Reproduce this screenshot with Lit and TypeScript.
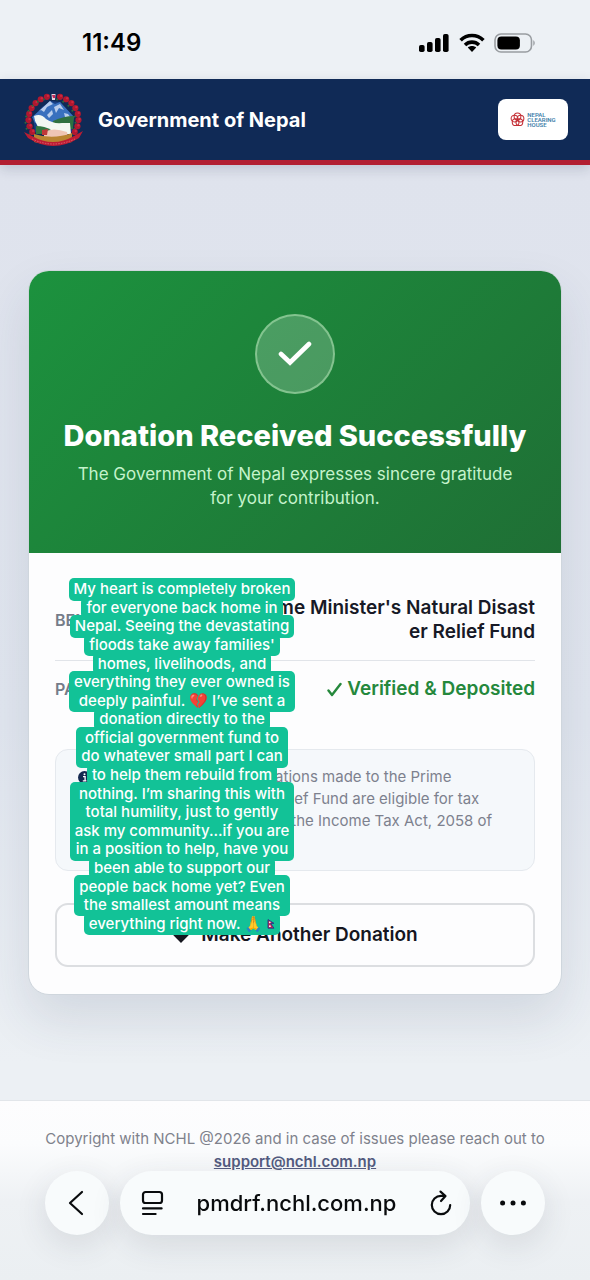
import { LitElement, html, css, svg } from "lit";
import { customElement } from "lit/decorators.js";

/* Caption lines; lines that share one plate are grouped together. */
const CAPTION: string[][] = [
  ["My heart is completely broken"],
  ["for everyone back home in"],
  ["Nepal. Seeing the devastating"],
  ["floods take away families'"],
  ["homes, livelihoods, and"],
  ["everything they ever owned is", "deeply painful. 💔 I’ve sent a"],
  ["donation directly to the"],
  ["official government fund to", "do whatever small part I can"],
  ["to help them rebuild from"],
  ["nothing. I’m sharing this with", "total humility, just to gently", "ask my community...if you are", "in a position to help, have you"],
  ["been able to support our"],
  ["people back home yet? Even", "the smallest amount means"],
  ["everything right now. 🙏"],
];

const flag = html`<svg class="flag" viewBox="0 0 8 10" aria-label="Nepal flag">
  <path d="M1 .6 L7 4.4 H3.6 L7 9.2 H1 Z" fill="#d4214d" stroke="#23408e" stroke-width="1" />
  <circle cx="2.8" cy="3.4" r=".8" fill="#fff" /><circle cx="2.9" cy="7.2" r=".9" fill="#fff" />
</svg>`;

@customElement("status-bar")
class StatusBar extends LitElement {
  static styles = css`
    :host { display: flex; justify-content: space-between; align-items: center; box-sizing: border-box; height: 79px; padding: 6px 53px 0 82px; background: #edf1f5; color: #000; }
    .time { font-size: 24px; font-weight: 600; line-height: 28px; }
    .icons { display: flex; align-items: center; gap: 9px; }
    svg { display: block; }
  `;
  render() {
    return html`
      <span class="time">11:49</span>
      <span class="icons">
        <svg width="31" height="20" viewBox="0 0 31 20">
          <rect x="0" y="12" width="5.6" height="7" rx="1.8" /><rect x="8" y="9" width="5.6" height="10" rx="1.8" />
          <rect x="16" y="5" width="5.6" height="14" rx="1.8" /><rect x="24" y="1" width="5.6" height="18" rx="1.8" />
        </svg>
        <svg width="26" height="20" viewBox="0 0 26 20" fill="none" stroke="#000" stroke-width="3.6">
          <path d="M1.6 7.2 C8 .9 18 .9 24.4 7.2" /><path d="M6 12 C10 8.2 16 8.2 20 12" />
          <path d="M8.8 14.6 C11 12.6 15 12.6 17.2 14.6 L13 19 Z" fill="#000" stroke="none" />
        </svg>
        <svg width="43" height="20" viewBox="0 0 43 20">
          <rect x="1" y="1" width="36.5" height="18" rx="6" fill="none" stroke="#999da1" stroke-width="1.6" />
          <rect x="3.4" y="3.4" width="22.5" height="13.2" rx="4" /><path d="M39.4 7 Q42 10 39.4 13 Z" fill="#8f9397" />
        </svg>
      </span>`;
  }
}

@customElement("gov-header")
class GovHeader extends LitElement {
  static styles = css`
    :host { display: flex; align-items: center; box-sizing: border-box; height: 86px; padding: 0 22px; background: #102a56; border-bottom: 5px solid #b21f31; box-shadow: 0 4px 12px rgba(20, 30, 60, 0.16); color: #fff; position: relative; }
    .name { flex: 1; margin-left: 12px; font-size: 20px; font-weight: 700; line-height: 26px; }
    .emblem { width: 64px; height: 56px; display: block; }
    .nch { display: flex; align-items: center; justify-content: center; gap: 2px; box-sizing: border-box; width: 70px; height: 41px; background: #fff; border-radius: 8px; text-decoration: none; }
    .nch svg { width: 15px; height: 15px; }
    .words { display: flex; flex-direction: column; font: 600 6px/5px Roboto, sans-serif; color: #3f81ab; }
  `;
  render() {
    const wreath = [];
    for (let i = 0; i < 17; i++) {
      const a = ((148 + i * 15.25) * Math.PI) / 180;
      if (i === 8) continue;
      const x = 31.5 + Math.cos(a) * 25;
      const y = 27.5 + Math.sin(a) * 23.5;
      wreath.push(svg`<g><circle cx=${x} cy=${y} r="3.1" fill="#b0182f"/><circle cx=${x + 1} cy=${y - 1} r="1.2" fill="#cf2840"/><circle cx=${x - 3} cy=${y + 2.6} r="1" fill="#2f6b3c"/></g>`);
    }
    return html`
      <svg class="emblem" viewBox="0 0 64 56" role="img" aria-label="Emblem of Nepal">
        ${wreath}
        <path d="M11 25 L20 15 L29 9 L38 10 L52 25 L50 40 H13 Z" fill="#183f83" />
        <path d="M10 25 L17 19 L28 9 L33 12 L38 10 L52 25 L50 31 H13 Z" fill="#3970be" />
        <path d="M17 19 L28 9 L31 12 L25 15 L22 20 L19 18 Z M32 15 L38 12 L42 18 L37 16 L34 21 Z M25 23 L30 18 L31 22 L27 26 Z M42 21 L46 22 L49 26 L43 25 Z" fill="#b9cdec" />
        <path d="M31 29 Q42 24 52 24 L51 37 H30 Z" fill="#2e7040" />
        <path d="M12 24 Q19 21 24 27 Q31 32 40 31 L48 31 L49 42 H23 Q13 34 12 24 Z" fill="#f2f7f2" />
        <path d="M14 34 Q23 34 29 38 L31 42 H14 Z" fill="#327641" />
        <path d="M22 40 Q31 35 45 40 L46 45 H22 Z" fill="#efc5b4" />
        <path d="M20 38 L26 37 L25 43 H20 Z" fill="#c03839" />
        <path d="M12 42 Q31 48 50 41 V50 Q31 55 12 50 Z" fill="#b98431" />
        <path d="M2 40 L10 44 Q31 56 52 44 L61 39 L57 46 Q31 62 6 46 Z" fill="#bd1c33" />
        <path d="M10 47 Q31 57 53 47" fill="none" stroke="#e0707c" stroke-width=".8" stroke-dasharray="1.5 1.2" />
        <path d="M29.5 2 H33.5 L33 8 H30 Z" fill="#ead3df" /><path d="M30 3 H33 V6 H31 Z" fill="#c22959" />
      </svg>
      <span class="name">Government of Nepal</span>
      <a class="nch" href="#" aria-label="Nepal Clearing House">
        <svg viewBox="0 0 16 16" fill="none" stroke="#c42e35" stroke-width="1.1">
          <circle cx="8" cy="4.7" r="3.6" /><circle cx="11.2" cy="7" r="3.6" /><circle cx="10" cy="10.8" r="3.6" />
          <circle cx="6" cy="10.8" r="3.6" /><circle cx="4.8" cy="7" r="3.6" />
        </svg>
        <span class="words"><span>NEPAL</span><span>CLEARING</span><span>HOUSE</span></span>
      </a>`;
  }
}

@customElement("story-caption")
class StoryCaption extends LitElement {
  static styles = css`
    :host { display: grid; grid-template-rows: repeat(19, 1fr); justify-content: center; justify-items: center; height: 353px; isolation: isolate; color: #fff; font-size: 15px; font-weight: 500; text-align: center; white-space: nowrap; }
    .plate { position: relative; display: grid; align-items: center; padding: 0 5px; line-height: 18px; }
    .plate::before { content: ""; position: absolute; inset: -2px 0; z-index: -1; border-radius: 5px; background: #12c297; }
    .n2 { grid-row: span 2; }
    .n4 { grid-row: span 4; }
    .flag { width: 8px; height: 10px; margin-left: 4px; }
  `;
  render() {
    return CAPTION.map(
      (g, i) => html`<div class="plate n${g.length}">
        ${g.map((t, j) => html`<span>${t}${i === CAPTION.length - 1 && j === g.length - 1 ? flag : ""}</span>`)}
      </div>`
    );
  }
}

@customElement("donation-card")
class DonationCard extends LitElement {
  static styles = css`
    :host { display: block; position: relative; box-sizing: border-box; border: 1px solid #cfd6dd; border-radius: 21px; background: #fdfdfe; box-shadow: 0 24px 50px rgba(40, 55, 90, 0.12); }
    .hero { display: flex; flex-direction: column; align-items: center; padding: 43px 27px; border-radius: 20px 20px 0 0; background: linear-gradient(135deg, #1c923e, #1f6f35); text-align: center; }
    .badge { display: grid; place-items: center; box-sizing: border-box; width: 80px; height: 80px; border: 2px solid rgba(190, 235, 190, 0.5); border-radius: 50%; background: rgba(255, 255, 255, 0.2); }
    h1 { margin: 24px 0 9px; font-size: 29px; font-weight: 800; line-height: 35px; color: #fff; }
    .hero p { margin: 0; max-width: 460px; font-size: 17px; line-height: 24px; color: #c5f3cc; }
    .body { padding: 27px 26px; }
    dl { margin: 0; }
    .row { display: flex; justify-content: space-between; align-items: center; padding: 16px 0; }
    .row + .row { border-top: 1px solid #e1e4e9; }
    dt { font-size: 16px; font-weight: 600; line-height: 24px; color: #757c89; }
    dd { margin: 0; max-width: 60%; font-size: 19px; font-weight: 600; line-height: 24px; text-align: right; word-break: break-all; color: #171926; }
    .ok { display: flex; align-items: center; gap: 5px; color: #25883c; word-break: normal; }
    .note { margin: 32px 0 0; padding: 16px 22px; border: 1px solid #e5e9ee; border-radius: 13px; background: #f5f8fb; font-size: 15px; line-height: 22px; color: #7d818e; }
    .note svg { width: 13px; height: 13px; vertical-align: -2px; margin-right: 5px; }
    .note strong { font-weight: 600; }
    button { display: flex; align-items: center; justify-content: center; gap: 11px; box-sizing: border-box; width: 100%; height: 64px; margin-top: 32px; border: 2px solid #dcdee1; border-radius: 13px; background: #fdfdfe; color: #15161f; font: 600 19px/24px Inter, sans-serif; }
    .over { position: absolute; top: 309px; left: 42px; width: 222px; }
  `;
  render() {
    return html`
      <div class="hero">
        <span class="badge">
          <svg width="34" height="28" viewBox="0 0 34 28" fill="none" stroke="#fff" stroke-width="4.6" stroke-linecap="round" stroke-linejoin="miter"><path d="M3 14 L12 22.5 L31 4" /></svg>
        </span>
        <h1>Donation Received Successfully</h1>
        <p>The Government of Nepal expresses sincere gratitude for your contribution.</p>
      </div>
      <div class="body">
        <dl>
          <div class="row"><dt>BENEFICIARY</dt><dd>Prime Minister's Natural Disaster Relief Fund</dd></div>
          <div class="row">
            <dt>PAYMENT STATUS</dt>
            <dd class="ok">
              <svg width="15" height="15" viewBox="0 0 15 15" fill="none" stroke="currentColor" stroke-width="2.4" stroke-linecap="round" stroke-linejoin="round"><path d="M1.5 8.5 L5 13 L13.5 2" /></svg>
              Verified &amp; Deposited
            </dd>
          </div>
        </dl>
        <p class="note">
          <svg viewBox="0 0 13 13"><circle cx="6.5" cy="6.5" r="6.5" fill="#14284f" /><path d="M5 5.6 H7.1 V9.6 M4.8 9.8 H8.4" stroke="#fff" stroke-width="1.3" fill="none" /><circle cx="6.5" cy="3.2" r="1" fill="#fff" /></svg><strong>Tax Exemption:</strong> Your donations made to the Prime<br />
          Minister's Natural Disaster Relief Fund are eligible for tax<br />
          exemption under Section 9 of the Income Tax Act, 2058 of<br />
          Nepal.
        </p>
        <button type="button">
          <svg width="18" height="17" viewBox="0 0 18 17"><path d="M9 16 L1.6 8.6 C-1.4 4.8 1.4 .8 4.8 .8 C6.8 .8 8.2 2 9 3.4 C9.8 2 11.2 .8 13.2 .8 C16.6 .8 19.4 4.8 16.4 8.6 Z" fill="#15161f" /></svg>
          Make Another Donation
        </button>
      </div>
      <story-caption class="over"></story-caption>`;
  }
}

@customElement("browser-bar")
class BrowserBar extends LitElement {
  static styles = css`
    :host { display: flex; gap: 11px; }
    button, .address { box-sizing: border-box; height: 64px; border: 0; background: #f8fbfc; color: #090b0d; box-shadow: 0 10px 32px rgba(50, 60, 70, 0.12); }
    button { display: grid; place-items: center; padding: 0; }
    .round { width: 64px; border-radius: 50%; }
    .address { flex: 1; display: flex; align-items: center; justify-content: space-between; min-width: 0; padding: 0 17px 0 20px; border-radius: 32px; }
    .address button { width: 24px; height: 28px; box-shadow: none; background: none; }
    .address input { flex: 1; min-width: 0; margin: 0 8px; padding: 0; border: 0; outline: 0; background: none; text-align: center; font: 500 22px/28px Inter, sans-serif; color: #090b0d; }
    svg { display: block; fill: none; stroke: currentColor; stroke-width: 2.2; stroke-linecap: round; stroke-linejoin: round; }
    .dots { fill: currentColor; stroke: none; }
  `;
  render() {
    return html`
      <button class="round" type="button" aria-label="Back"><svg width="18" height="26" viewBox="0 0 18 26"><path d="M14 2 L2 13 L14 24" /></svg></button>
      <div class="address">
        <button type="button" aria-label="Page menu"><svg width="24" height="26" viewBox="0 0 24 26"><rect x="3" y="2" width="19" height="11" rx="2.6" /><path d="M3 18.4 H21.6 M3 24 H15.6" /></svg></button>
        <input type="text" aria-label="Address" value="pmdrf.nchl.com.np" />
        <button type="button" aria-label="Reload"><svg width="24" height="26" viewBox="0 0 24 26"><path d="M14.5 5.8 H12 A9.2 9.2 0 1 0 21.2 15 M11.5 1.6 L16.5 6 L12 11" /></svg></button>
      </div>
      <button class="round" type="button" aria-label="More"><svg class="dots" width="28" height="6" viewBox="0 0 28 6"><circle cx="3.6" cy="3" r="2.5" /><circle cx="14" cy="3" r="2.5" /><circle cx="24.4" cy="3" r="2.5" /></svg></button>`;
  }
}

@customElement("app-root")
class AppRoot extends LitElement {
  static styles = css`
    :host { display: flex; flex-direction: column; min-height: 100vh; font-family: Inter, sans-serif; background: #ecf0f4; }
    main { flex: 1; display: flex; flex-direction: column; justify-content: center; padding: 0 28px; background: linear-gradient(180deg, #dfe3ed, #e1e6ef 60%, #ecf0f4 96%); }
    footer { box-sizing: border-box; min-height: 180px; padding: 26px 28px; border-top: 1px solid #e2e6ea; background: linear-gradient(180deg, #fdfdfe, #fbfcfd 24%, #eef1f4 56%, #ebeff2); text-align: center; font-size: 15px; line-height: 23px; color: #7f828c; }
    footer p { margin: 0; }
    footer a { font-weight: 600; color: #535b80; }
    .bar { position: fixed; left: 45px; right: 45px; bottom: 45px; }
  `;
  render() {
    return html`
      <status-bar></status-bar>
      <gov-header></gov-header>
      <main><donation-card></donation-card></main>
      <footer>
        <p>Copyright with NCHL @2026 and in case of issues please reach out to <a href="mailto:support@nchl.com.np">support@nchl.com.np</a></p>
      </footer>
      <browser-bar class="bar"></browser-bar>`;
  }
}
